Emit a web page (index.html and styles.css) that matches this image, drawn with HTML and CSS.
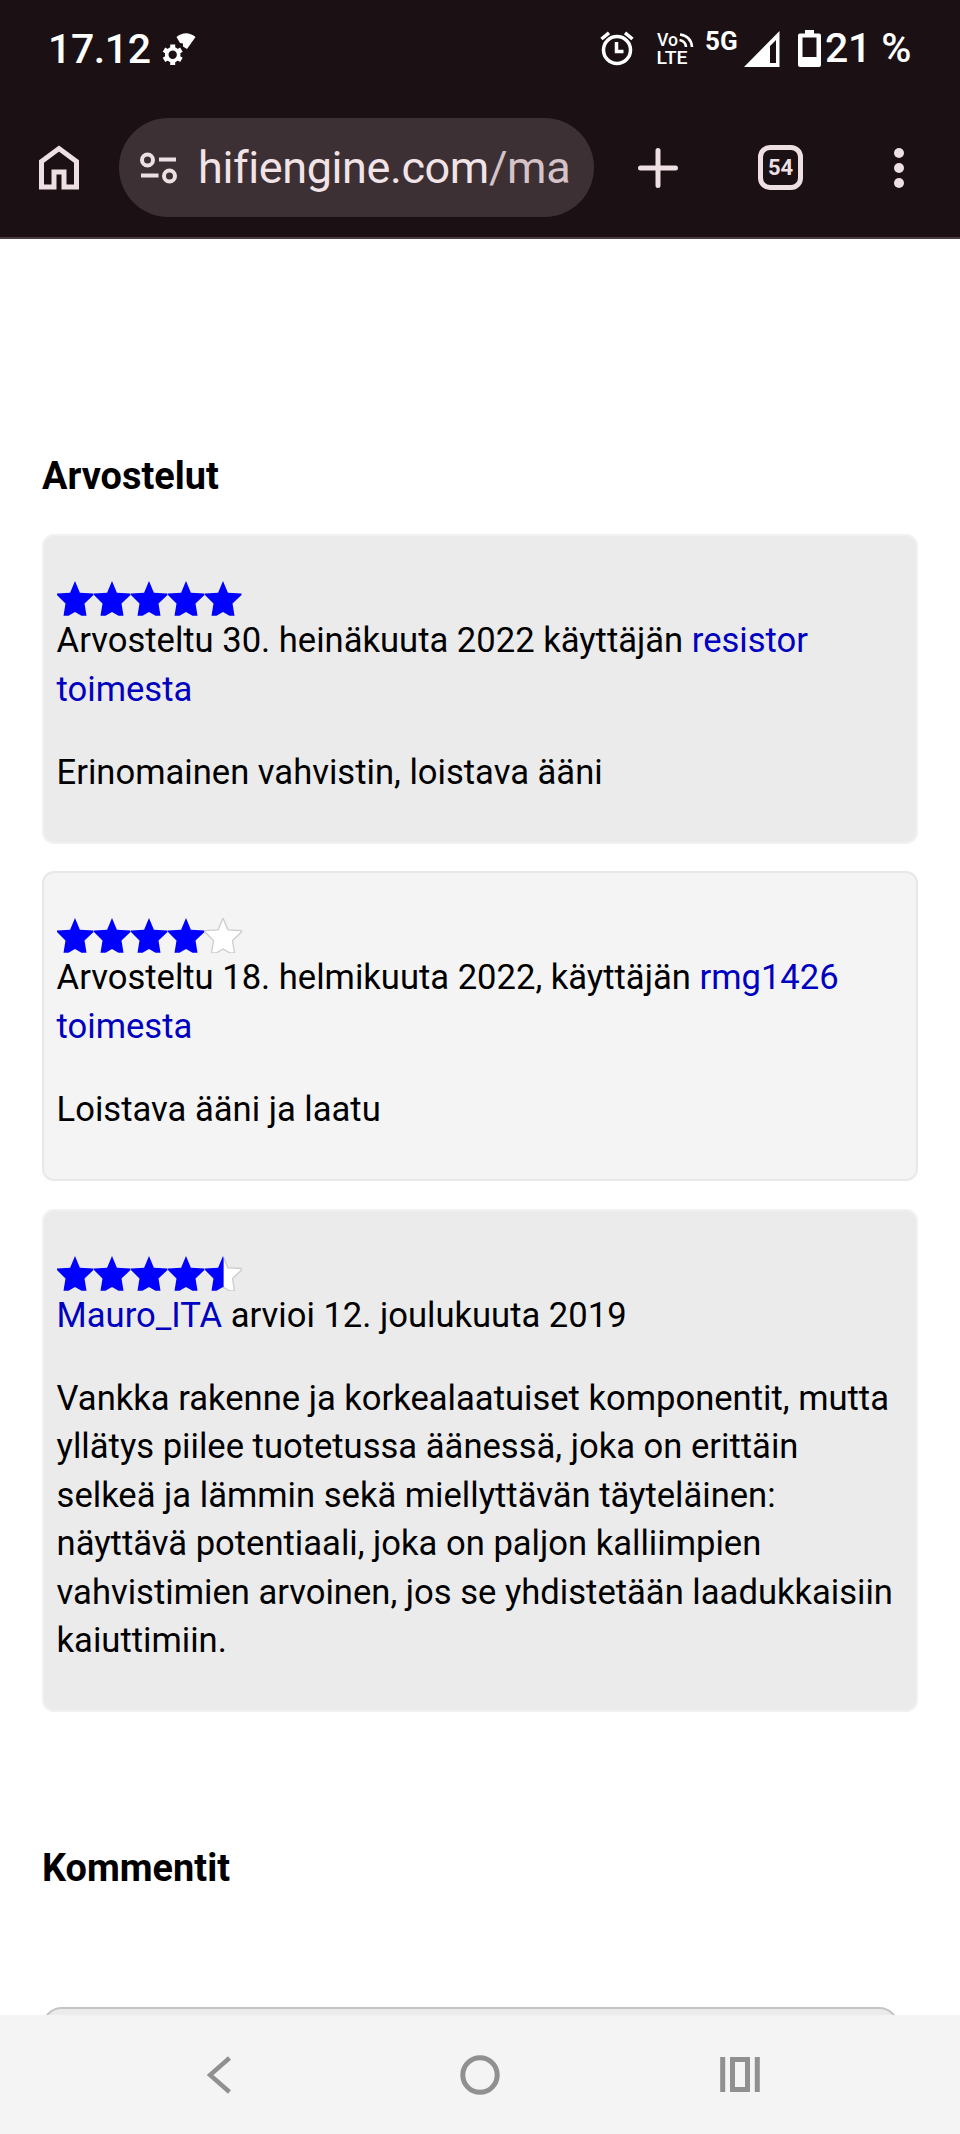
FILE: index.html
```html
<!DOCTYPE html>
<html lang="fi">
<head>
<meta charset="utf-8">
<title>Arvostelut</title>
<link rel="stylesheet" href="styles.css">
</head>
<body>
<svg class="defs" aria-hidden="true">
  <defs>
    <path id="star" d="M18 0 22.900 11.800 36.500 12.500V14L27.500 22.500 29.500 34.800H24.500L18 31 11.500 34.800H6.500L8.500 22.500 0 14V12.500L13.100 11.800Z"/>
    <clipPath id="left-half"><rect width="18.6" height="35"/></clipPath>
    <clipPath id="right-half"><rect x="18.6" width="18.4" height="35"/></clipPath>
  </defs>
</svg>
<div class="screen">
  <header class="chrome">
    <div class="status">
      <span class="clock">17.12</span>
      <svg class="wifi" width="34" height="34" viewBox="0 0 34 34">
        <path fill="#fff" d="M14.500 4Q24-3.500 33.500 4L25 16 21 13.500V10.500L18 10Z"/>
        <circle cx="10.700" cy="21.700" r="6" fill="none" stroke="#fff" stroke-width="3.600"/>
        <g stroke="#fff" stroke-width="5"><path d="M10.700 11.500V16M10.700 27.400V32M2 16.700 5.700 18.900M15.700 24.600 19.400 26.800M2 26.800 5.700 24.600M15.700 18.900 19.400 16.700"/></g>
      </svg>
      <svg class="alarm" width="34" height="36" viewBox="0 0 34 36" fill="none" stroke="#fff" stroke-width="3.500">
        <circle cx="17" cy="20" r="13.500"/><path d="M16.500 12V21.500H23.500M1.500 9 9 2.800M32.500 9 25 2.800"/>
      </svg>
      <svg class="volte" width="37" height="36" viewBox="0 0 37 36">
        <text class="volte-text" x="0" y="13.500" textLength="21" lengthAdjust="spacingAndGlyphs">Vo</text>
        <text class="volte-text" x="-0.500" y="32" textLength="31" lengthAdjust="spacingAndGlyphs">LTE</text>
        <path d="M23 2.500Q34 4 35 15M22.500 8Q28.500 9 29 15" fill="none" stroke="#fff" stroke-width="2.600"/>
      </svg>
      <span class="network">5G</span>
      <svg class="signal" width="36" height="36" viewBox="0 0 36 36"><path fill="#fff" fill-rule="evenodd" d="M35.500 0V36H0ZM26 15V32H32V9Z"/></svg>
      <svg class="battery" width="23" height="37" viewBox="0 0 23 37"><path fill="#fff" fill-rule="evenodd" d="M7 0H16V3.500H21Q23 3.500 23 5.500V35Q23 37 21 37H2Q0 37 0 35V5.500Q0 3.500 2 3.500H7ZM4.500 7.500V27H18.500V7.500Z"/></svg>
      <span class="percent">21 %</span>
    </div>
    <div class="toolbar">
      <svg class="home" width="40" height="45" viewBox="0 0 40 45"><path d="M2.500 16.500 20 3.500 37.500 16.500V42H25V27H15V42H2.500Z" fill="none" stroke="#eedfe2" stroke-width="5"/></svg>
      <div class="omnibox">
        <svg class="tune" width="38" height="32" viewBox="0 0 38 32" fill="none" stroke="#eedfe2" stroke-width="4"><circle cx="7.500" cy="8" r="5.500"/><circle cx="29.500" cy="24" r="5.500"/><path d="M19 7.500H36M1 23.500H18.500"/></svg>
        <span class="url">hifiengine.com<span class="path">/ma</span></span>
      </div>
      <svg class="plus" width="40" height="40" viewBox="0 0 40 40"><path d="M20 2.500V37.500M2.500 20H37.500" stroke="#eedfe2" stroke-width="5" stroke-linecap="round"/></svg>
      <span class="tabs">54</span>
      <svg class="more" width="10" height="40" viewBox="0 0 10 40" fill="#eedfe2"><circle cx="5" cy="5" r="5"/><circle cx="5" cy="20" r="5"/><circle cx="5" cy="35" r="5"/></svg>
    </div>
  </header>

  <main class="content">
    <h2 class="heading">Arvostelut</h2>
    <article class="review">
      <svg class="stars" width="186" height="35" viewBox="0 0 186 35" fill="#00f"><use href="#star"/><use href="#star" x="37"/><use href="#star" x="74"/><use href="#star" x="111"/><use href="#star" x="148"/></svg>
      <p class="meta">Arvosteltu 30. heinäkuuta 2022 käyttäjän <a class="user">resistor<br>toimesta</a></p>
      <p class="text">Erinomainen vahvistin, loistava ääni</p>
    </article>
    <article class="review light">
      <svg class="stars" width="186" height="35" viewBox="0 0 186 35" fill="#00f"><use href="#star"/><use href="#star" x="37"/><use href="#star" x="74"/><use href="#star" x="111"/><use href="#star" x="148" class="empty"/></svg>
      <p class="meta">Arvosteltu 18. helmikuuta 2022, käyttäjän <a class="user">rmg1426<br>toimesta</a></p>
      <p class="text">Loistava ääni ja laatu</p>
    </article>
    <article class="review">
      <svg class="stars" width="186" height="35" viewBox="0 0 186 35" fill="#00f"><use href="#star"/><use href="#star" x="37"/><use href="#star" x="74"/><use href="#star" x="111"/><g transform="translate(148 0)"><use href="#star" class="empty" clip-path="url(#right-half)"/><use href="#star" clip-path="url(#left-half)"/></g></svg>
      <p class="meta"><a class="user">Mauro_ITA</a> arvioi 12. joulukuuta 2019</p>
      <p class="text">Vankka rakenne ja korkealaatuiset komponentit, mutta<br>yllätys piilee tuotetussa äänessä, joka on erittäin<br>selkeä ja lämmin sekä miellyttävän täyteläinen:<br>näyttävä potentiaali, joka on paljon kalliimpien<br>vahvistimien arvoinen, jos se yhdistetään laadukkaisiin<br>kaiuttimiin.</p>
    </article>
    <h2 class="heading comments">Kommentit</h2>
    <div class="comment-box"></div>
  </main>

  <nav class="navbar">
    <svg class="back" width="25" height="38" viewBox="0 0 25 38"><path d="M22.500 2 3 19 22.500 36" fill="none" stroke="#909090" stroke-width="4.500"/></svg>
    <svg class="circle" width="40" height="40" viewBox="0 0 40 40"><circle cx="20" cy="20" r="17.200" fill="none" stroke="#909090" stroke-width="5"/></svg>
    <svg class="recents" width="40" height="35" viewBox="0 0 40 35" fill="none" stroke="#909090" stroke-width="5"><path d="M2.700 0V35M37.300 0V35M12.500 2.500H27.500V32.500H12.500Z"/></svg>
  </nav>
</div>
</body>
</html>
```
FILE: styles.css
```css
* { box-sizing: border-box; }
body { margin: 0; background: #fff; font-family: Roboto, "Liberation Sans", sans-serif; color: #000; }
.defs { position: absolute; width: 0; height: 0; }
svg { display: block; flex: none; }
.screen { width: 960px; height: 2134px; display: flex; flex-direction: column; overflow: hidden; }

.chrome { flex: none; height: 239px; background: #1b1114; border-bottom: 2px solid #4a3c41; }
.status { display: flex; height: 98px; align-items: flex-start; padding-left: 48px; color: #fff; font-weight: 500; white-space: nowrap; }
.clock { width: 114px; padding-top: 25px; font-size: 41px; line-height: 48px; letter-spacing: -0.4px; }
.wifi { margin-top: 33px; margin-left: 0; }
.alarm { margin: 30px 0 0 404px; }
.volte { margin: 32px 0 0 23px; overflow: visible; }
.volte-text { font: 500 18px Roboto, sans-serif; fill: #fff; }
.network { width: 40px; padding-top: 25px; margin-left: 11px; font-size: 26px; line-height: 32px; font-weight: 700; }
.signal { margin: 31px 0 0 -1px; }
.battery { margin: 30px 0 0 18px; }
.percent { margin-left: 4px; padding-top: 24px; font-size: 41px; line-height: 48px; letter-spacing: -0.2px; }

.toolbar { display: flex; height: 139px; align-items: center; padding: 0 0 0 39px; }
.home { width: 40px; }
.omnibox { flex: none; display: flex; align-items: center; width: 475px; height: 99px; margin-left: 40px; padding-left: 21px; border-radius: 50px; background: #3c3034; }
.url { margin-left: 20px; font-size: 45px; line-height: 60px; letter-spacing: -0.4px; color: #f2e3e7; white-space: nowrap; }
.path { color: #d5c3c8; }
.plus { margin-left: 44px; }
.tabs { flex: none; width: 45px; height: 45px; margin-left: 80px; border: 5px solid #eedfe2; border-radius: 12px; color: #eedfe2; font-size: 22px; font-weight: 700; line-height: 36px; text-align: center; }
.more { margin-left: 91px; }

.content { flex: 1; min-height: 0; overflow: hidden; padding: 215px 42px 0; }
.heading { margin: 0; font-size: 37.9px; line-height: 44px; font-weight: 700; }
.review { width: 876px; margin-bottom: 27.2px; padding: 45.3px 12.6px 46px; border: 2px solid #f1f1f1; border-radius: 12px; background: #ebebeb; font-size: 34.6px; line-height: 48.4px; }
.heading + .review { margin-top: 35.800px; }
.light { background: #f4f4f4; border-color: #e8e8e8; }
.stars { height: 35px; }
.empty { fill: #fff; stroke: #ccc; stroke-width: 1.3px; }
.meta, .text { margin: 0; white-space: nowrap; }
.text { margin-top: 34.7px; }
.user { color: #0000c0; }
.comments { margin-top: 133.5px; }
.comment-box { width: 857px; height: 120px; margin-top: 117.200px; border: 2px solid #c4c4c4; border-radius: 20px; background: #ebebeb; }

.navbar { flex: none; display: flex; align-items: center; height: 119px; background: #f4f4f4; padding-left: 207px; }
.circle { margin-left: 228px; }
.recents { margin-left: 220px; }
```
